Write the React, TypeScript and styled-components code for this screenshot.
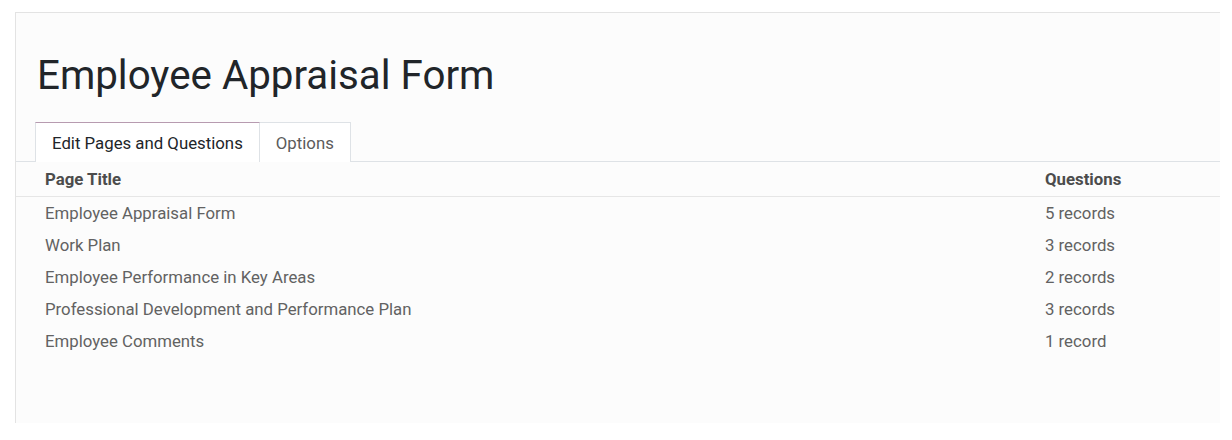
import styled, { createGlobalStyle } from 'styled-components';

const GlobalStyle = createGlobalStyle`
  body {
    margin: 0;
    background: #ffffff;
    font-family: Roboto, 'Liberation Sans', sans-serif;
  }
`;

const Page = styled.div`
  width: 1232px;
  height: 440px;
  padding: 12px 12px 0 15px;
  box-sizing: border-box;
`;

const Sheet = styled.div`
  height: 410px;
  background: #fcfcfc;
  border-top: 1px solid #e3e3e3;
  border-left: 1px solid #e3e3e3;
`;

const Title = styled.h1`
  margin: 0;
  padding: 39px 0 0 21px;
  font-size: 40.3px;
  line-height: 48px;
  font-weight: 400;
  color: #212529;
`;

const TabBar = styled.div`
  display: flex;
  margin-top: 22px;
  padding-left: 19px;
  border-bottom: 1px solid #dee2e6;
`;

const Tab = styled.div<{ $active?: boolean }>`
  height: 39px;
  padding: 0 16px;
  display: flex;
  align-items: center;
  font-size: 16.8px;
  color: ${(p) => (p.$active ? '#212529' : '#5b5b5b')};
  background: #ffffff;
  border: 1px solid #dee2e6;
  border-top-color: ${(p) => (p.$active ? '#b79bb0' : '#dee2e6')};
  border-bottom: none;
  margin-bottom: -1px;
  & + & {
    border-left: none;
  }
`;

const Table = styled.div`
  display: flex;
  flex-direction: column;
`;

const Row = styled.div<{ $head?: boolean }>`
  display: grid;
  grid-template-columns: 1fr 175px;
  height: ${(p) => (p.$head ? '34px' : '32px')};
  align-items: center;
  padding-left: 29px;
  font-size: 16.8px;
  font-weight: ${(p) => (p.$head ? 700 : 400)};
  color: ${(p) => (p.$head ? '#4c4c4c' : '#626262')};
  border-bottom: ${(p) => (p.$head ? '1px solid #e6e6e6' : 'none')};
`;

const pages = [
  ['Employee Appraisal Form', '5 records'],
  ['Work Plan', '3 records'],
  ['Employee Performance in Key Areas', '2 records'],
  ['Professional Development and Performance Plan', '3 records'],
  ['Employee Comments', '1 record'],
];

export default function App() {
  return (
    <Page>
      <GlobalStyle />
      <Sheet>
        <Title>Employee Appraisal Form</Title>
        <TabBar>
          <Tab $active>Edit Pages and Questions</Tab>
          <Tab>Options</Tab>
        </TabBar>
        <Table>
          <Row $head>
            <span>Page Title</span>
            <span>Questions</span>
          </Row>
          {pages.map((p) => (
            <Row key={p[0]}>
              <span>{p[0]}</span>
              <span>{p[1]}</span>
            </Row>
          ))}
        </Table>
      </Sheet>
    </Page>
  );
}
